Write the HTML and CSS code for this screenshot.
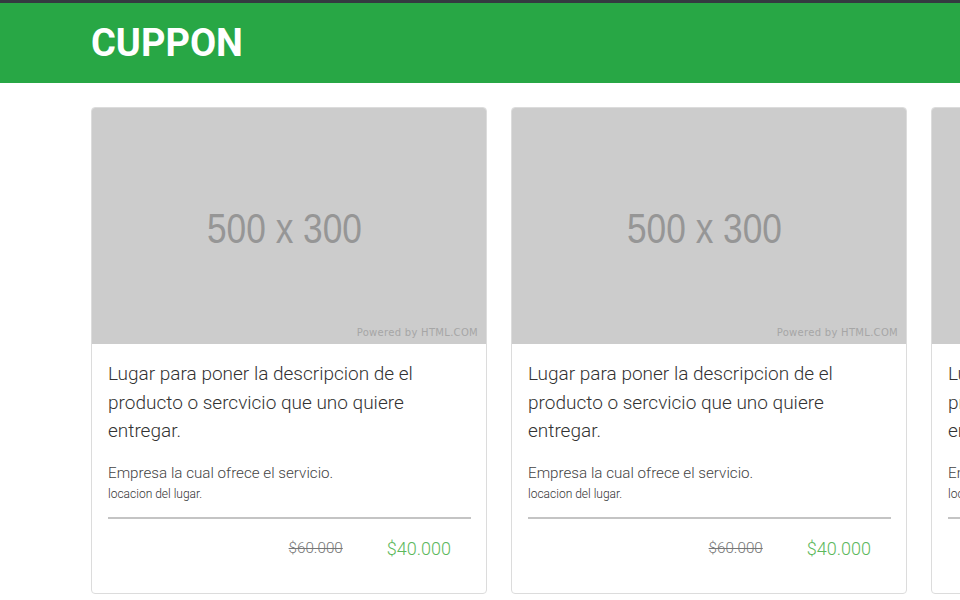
FILE: index.html
```html
<!DOCTYPE html>
<html lang="es">
<head>
<meta charset="utf-8">
<title>CUPPON</title>
<link rel="stylesheet" href="styles.css">
</head>
<body>
<header class="topbar">
  <div class="container">
    <h1 class="brand">CUPPON</h1>
  </div>
</header>
<main class="container">
  <div class="cards">
    <article class="card">
      <div class="thumb">
        <span class="thumb-size">500 x 300</span>
        <span class="thumb-credit">Powered by HTML.COM</span>
      </div>
      <div class="card-body">
        <p class="title">Lugar para poner la descripcion de el producto o sercvicio que uno quiere entregar.</p>
        <p class="company">Empresa la cual ofrece el servicio.</p>
        <p class="place">locacion del lugar.</p>
        <hr class="divider">
        <div class="prices">
          <span class="old">$60.000</span>
          <span class="new">$40.000</span>
        </div>
      </div>
    </article>
    <article class="card">
      <div class="thumb">
        <span class="thumb-size">500 x 300</span>
        <span class="thumb-credit">Powered by HTML.COM</span>
      </div>
      <div class="card-body">
        <p class="title">Lugar para poner la descripcion de el producto o sercvicio que uno quiere entregar.</p>
        <p class="company">Empresa la cual ofrece el servicio.</p>
        <p class="place">locacion del lugar.</p>
        <hr class="divider">
        <div class="prices">
          <span class="old">$60.000</span>
          <span class="new">$40.000</span>
        </div>
      </div>
    </article>
    <article class="card">
      <div class="thumb">
        <span class="thumb-size">500 x 300</span>
        <span class="thumb-credit">Powered by HTML.COM</span>
      </div>
      <div class="card-body">
        <p class="title">Lugar para poner la descripcion de el producto o sercvicio que uno quiere entregar.</p>
        <p class="company">Empresa la cual ofrece el servicio.</p>
        <p class="place">locacion del lugar.</p>
        <hr class="divider">
        <div class="prices">
          <span class="old">$60.000</span>
          <span class="new">$40.000</span>
        </div>
      </div>
    </article>
  </div>
</main>
</body>
</html>
```
FILE: styles.css
```css
* { box-sizing: border-box; }
html, body {
  margin: 0;
  padding: 0;
  overflow: hidden;
  background: #fff;
  font-family: Roboto, "Liberation Sans", sans-serif;
  color: #333;
}
.topbar {
  background: #28a745;
  border-top: 3px solid #343a40;
  height: 83px;
}
.container {
  padding-left: 91px;
}
.brand {
  margin: 0;
  font-family: Roboto, "Liberation Sans", sans-serif;
  font-weight: 700;
  font-size: 38px;
  line-height: 80px;
  color: #fff;
}
.cards {
  display: flex;
  gap: 24px;
  padding-top: 24px;
}
.card {
  flex: 0 0 396px;
  border: 1px solid #dcdcdc;
  border-radius: 4px;
  background: #fff;
  overflow: hidden;
}
.thumb {
  position: relative;
  height: 236px;
  background: #cccccc;
  display: flex;
  align-items: center;
  justify-content: center;
}
.thumb-size {
  display: inline-block;
  font-family: "Liberation Sans", Arial, sans-serif;
  font-size: 43px;
  color: #969696;
  transform: scaleX(0.82);
  margin: 4px 9px 0 0;
}
.thumb-credit {
  position: absolute;
  right: 8px;
  bottom: 6px;
  font-family: "DejaVu Sans", Verdana, sans-serif;
  font-size: 10px;
  color: #a6a6a6;
  letter-spacing: 0.3px;
}
.card-body {
  padding: 16px 15px 31px 16px;
}
.title {
  margin: 0 0 15px;
  font-weight: 300;
  font-size: 19px;
  line-height: 28.5px;
  color: #333;
}
.company {
  margin: 0;
  font-weight: 300;
  font-size: 15.2px;
  line-height: 24px;
  color: #444;
}
.place {
  margin: 0;
  font-weight: 300;
  font-size: 12px;
  line-height: 18px;
  color: #333;
}
.divider {
  margin: 14px 0 16px;
  border: 0;
  border-top: 2px solid #c4c4c4;
}
.prices {
  display: flex;
  justify-content: flex-end;
  align-items: center;
  gap: 44px;
  padding-right: 20px;
  height: 27px;
}
.old {
  font-weight: 300;
  font-size: 15.2px;
  color: #777;
  text-decoration: line-through;
}
.new {
  font-weight: 300;
  font-size: 18px;
  color: #5cb85c;
}
```
